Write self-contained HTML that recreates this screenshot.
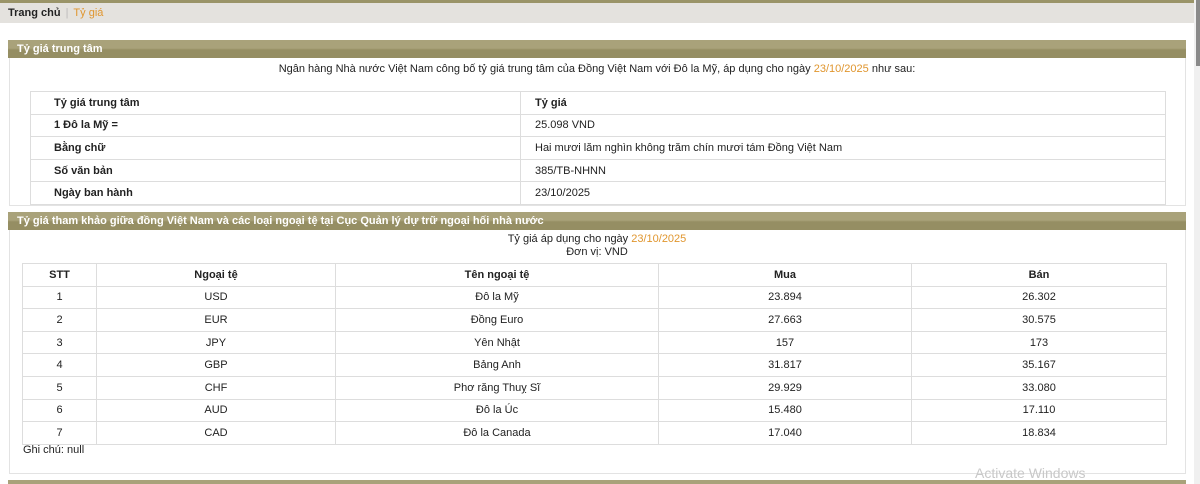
<!DOCTYPE html>
<html><head><meta charset="utf-8"><style>
*{margin:0;padding:0;box-sizing:border-box}
body{width:1200px;height:484px;overflow:hidden;background:#fff;font-family:"Liberation Sans",Arial,sans-serif;font-size:11px;color:#222;position:relative}
.abs{position:absolute}
.topbar{left:0;top:0;width:1194px;height:3px;background:#9a9468}
.crumb{left:0;top:3px;width:1194px;height:20px;background:#e4e2de;font-size:11px;line-height:21px;padding-left:8px}
.crumb b{color:#222}
.crumb span.sep{color:#bbb;margin:0 5px}
.crumb span.cur{color:#e0962f}
.panel{left:9px;width:1177px;border:1px solid #e3e3e3;background:#fff}
.hd{left:8px;width:1178px;height:18px;background:linear-gradient(#a9a27a 0,#a9a27a 45%,#958e63 55%,#958e63 100%);color:#fff;font-weight:bold;font-size:11px;line-height:18px;padding-left:9px}
table{border-collapse:collapse;position:absolute}
td{border:1px solid #ddd;height:22.6px;padding:0}
.t1 td{padding-left:23px}
.t1 td:last-child{padding-left:14px}
.t1 td.b{font-weight:bold}
.t2 td{text-align:center}
.t2 tr:first-child td{font-weight:bold}
.or{color:#e0962f}
.scroll{left:1194px;top:0;width:6px;height:484px;background:#f0f0f0}
.thumb{left:1196px;top:0;width:4px;height:66px;background:#8a8a8a}
</style></head><body>
<div class="abs topbar"></div>
<div class="abs crumb"><b>Trang chủ</b><span class="sep">|</span><span class="cur">Tỷ giá</span></div>
<div class="abs panel" style="top:40px;height:166px"></div>
<div class="abs hd" style="top:40px">Tỷ giá trung tâm</div>
<div class="abs" style="left:0;width:1194px;top:63px;text-align:center">Ngân hàng Nhà nước Việt Nam công bố tỷ giá trung tâm của Đồng Việt Nam với Đô la Mỹ, áp dụng cho ngày <span class="or">23/10/2025</span> như sau:</div>
<table class="t1" style="left:30px;top:91px;width:1136px">
<tr><td class="b" style="width:490px">Tỷ giá trung tâm</td><td class="b">Tỷ giá</td></tr>
<tr><td class="b">1 Đô la Mỹ =</td><td>25.098 VND</td></tr>
<tr><td class="b">Bằng chữ</td><td>Hai mươi lăm nghìn không trăm chín mươi tám Đồng Việt Nam</td></tr>
<tr><td class="b">Số văn bản</td><td>385/TB-NHNN</td></tr>
<tr><td class="b">Ngày ban hành</td><td>23/10/2025</td></tr>
</table>
<div class="abs panel" style="top:212px;height:262px"></div>
<div class="abs hd" style="top:212px">Tỷ giá tham khảo giữa đồng Việt Nam và các loại ngoại tệ tại Cục Quản lý dự trữ ngoại hối nhà nước</div>
<div class="abs" style="left:0;width:1194px;top:233px;text-align:center;line-height:13px">Tỷ giá áp dụng cho ngày <span class="or">23/10/2025</span><br>Đơn vị: VND</div>
<table class="t2" style="left:22px;top:263px;width:1145px">
<tr><td style="width:74px">STT</td><td style="width:239px">Ngoại tệ</td><td style="width:323px">Tên ngoại tệ</td><td style="width:253px">Mua</td><td>Bán</td></tr>
<tr><td>1</td><td>USD</td><td>Đô la Mỹ</td><td>23.894</td><td>26.302</td></tr>
<tr><td>2</td><td>EUR</td><td>Đồng Euro</td><td>27.663</td><td>30.575</td></tr>
<tr><td>3</td><td>JPY</td><td>Yên Nhật</td><td>157</td><td>173</td></tr>
<tr><td>4</td><td>GBP</td><td>Bảng Anh</td><td>31.817</td><td>35.167</td></tr>
<tr><td>5</td><td>CHF</td><td>Phơ răng Thuỵ Sĩ</td><td>29.929</td><td>33.080</td></tr>
<tr><td>6</td><td>AUD</td><td>Đô la Úc</td><td>15.480</td><td>17.110</td></tr>
<tr><td>7</td><td>CAD</td><td>Đô la Canada</td><td>17.040</td><td>18.834</td></tr>
</table>
<div class="abs" style="left:23px;top:444px">Ghi chú: null</div>
<div class="abs" style="left:975px;top:465px;font-size:14px;color:#c8c8c8">Activate Windows</div>
<div class="abs" style="left:8px;top:480px;width:1178px;height:4px;background:#a9a27a"></div>
<div class="abs scroll"></div>
<div class="abs thumb"></div>
</body></html>
